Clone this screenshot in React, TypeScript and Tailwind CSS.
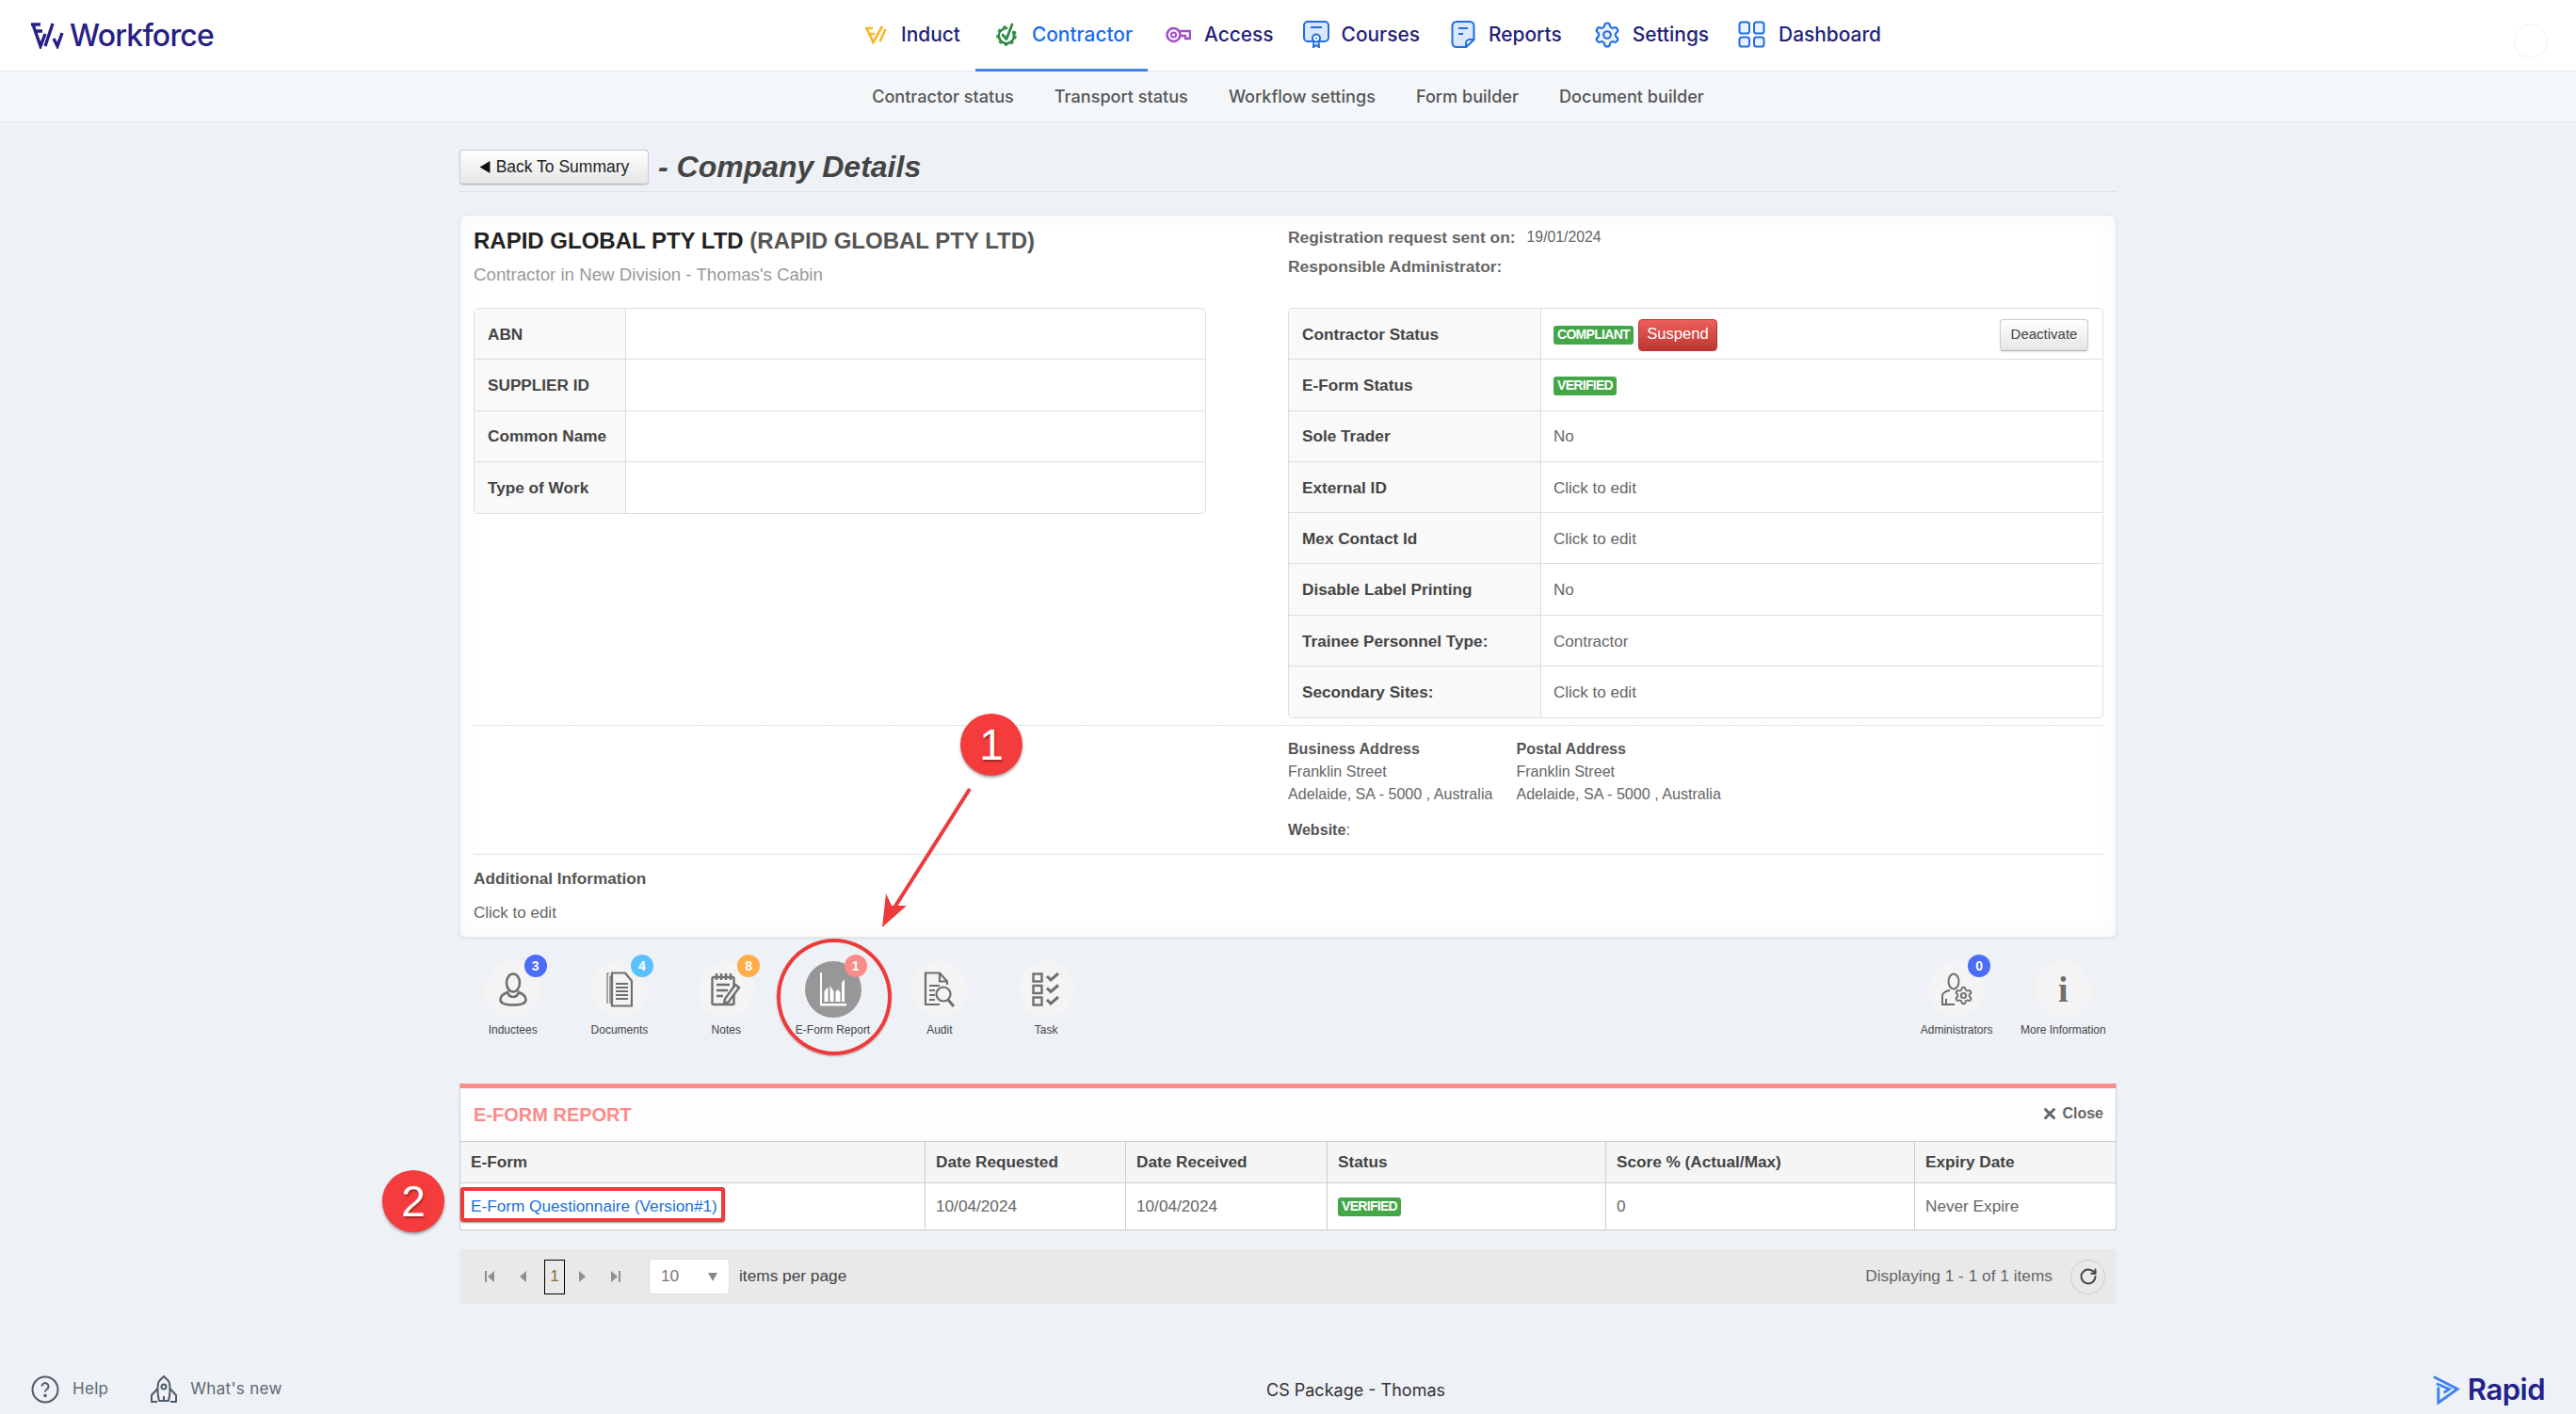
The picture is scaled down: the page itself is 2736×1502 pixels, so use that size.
import { ReactNode } from 'react';
import { Settings, X, RotateCw } from 'lucide-react';

const FONT = "font-['Liberation_Sans',Arial,sans-serif]";
const UI = "font-['Inter',sans-serif]";

function WMark({ className, color }: { className: string; color: string }) {
  return (
    <svg viewBox="0 0 36 28" className={className} fill="none" stroke={color} strokeWidth="3.4">
      <path d="M1 2h10M3 2l8 23 5-13M7 9h6" />
      <path d="M24 1l-8 24M34 11l-5 14-4-8" />
    </svg>
  );
}

function InductIcon() {
  return (
    <svg viewBox="0 0 24 20" className="w-[24px] h-[20px]" fill="none" stroke="#f8b525" strokeWidth="2.6">
      <path d="M1 3h8M2.5 3l7 15L19 1M6 9h5" />
      <path d="M22.5 4l-6 13" />
    </svg>
  );
}

function ContractorIcon() {
  return (
    <svg viewBox="0 0 22 25" className="w-[22px] h-[25px]" fill="none" strokeLinecap="round" strokeLinejoin="round">
      <circle cx="11" cy="14" r="8" stroke="#2e8b45" strokeWidth="2.6" />
      <circle cx="11" cy="14" r="9.800" stroke="#2e8b45" strokeWidth="1.800" strokeLinecap="butt" strokeDasharray="3.500 3.500" />
      <path d="M7 13l4 4.500L17 2" stroke="#fff" strokeWidth="6" />
      <path d="M7 13l4 4.500L17 2" stroke="#2e8b45" strokeWidth="2.800" />
    </svg>
  );
}

function AccessIcon() {
  return (
    <svg viewBox="0 0 27 18" className="w-[27px] h-[18px]" fill="none" stroke="#a24fcb" strokeWidth="2.600">
      <circle cx="8.500" cy="9" r="7" />
      <circle cx="8.500" cy="9" r="2.600" strokeWidth="2" />
      <path d="M15 5h11v8h-5v-3h-6" strokeLinejoin="round" />
    </svg>
  );
}

function CoursesIcon() {
  return (
    <svg viewBox="0 0 28 29" className="w-[28px] h-[29px]" fill="none" stroke="#1f6fe0" strokeWidth="2">
      <rect x="1" y="1" width="26" height="21" rx="4" fill="#dbe8fb" />
      <path d="M8 7h12" />
      <path d="M11.500 22l-.5 6 3-2 3 2-.5-6" fill="#fff" />
      <circle cx="14" cy="18.500" r="4" fill="#fff" />
      <circle cx="14" cy="18.500" r="1" fill="#1f6fe0" stroke="none" />
    </svg>
  );
}

function ReportsIcon() {
  return (
    <svg viewBox="0 0 26 29" className="w-[26px] h-[29px]" fill="none" stroke="#1f6fe0" strokeWidth="2" strokeLinejoin="round">
      <path d="M16 28H6a4.500 4.500 0 0 1-4.500-4.500V5.500A4.500 4.500 0 0 1 6 1h14a4.500 4.500 0 0 1 4.500 4.500V20z" fill="#dbe8fb" />
      <path d="M16 28v-4a4 4 0 0 1 4-4h4.500z" fill="#fff" />
      <path d="M8 8h10M8 14h5" />
    </svg>
  );
}

function DashboardIcon() {
  return (
    <svg viewBox="0 0 29 29" className="w-[29px] h-[29px]" fill="#eaf1fc" stroke="#1f6fe0" strokeWidth="2">
      <rect x="1.500" y="1.500" width="10.500" height="12" rx="2.600" />
      <rect x="17" y="1.500" width="10.500" height="12" rx="2.600" />
      <rect x="1.500" y="17.500" width="10.500" height="10" rx="2.600" />
      <rect x="17" y="17.500" width="10.500" height="10" rx="2.600" />
    </svg>
  );
}

const navItems = [
  { label: 'Induct', icon: <InductIcon />, pad: 'pl-[19px] pr-[16px]', gap: 'gap-[15px]' },
  { label: 'Contractor', icon: <ContractorIcon />, pad: 'pl-[22px] pr-[16px]', gap: 'gap-[16px]', active: true },
  { label: 'Access', icon: <AccessIcon />, pad: 'pl-[19px] pr-[14px]', gap: 'gap-[14px]' },
  { label: 'Courses', icon: <CoursesIcon />, pad: 'pl-[17px] pr-[15px]', gap: 'gap-[13px]' },
  { label: 'Reports', icon: <ReportsIcon />, pad: 'pl-[18px] pr-[16px]', gap: 'gap-[14px]' },
  { label: 'Settings', icon: <Settings className="w-[30px] h-[30px] text-[#1f6fe0] fill-[#eaf1fc]" strokeWidth={1.7} />, pad: 'pl-[17px] pr-[15px]', gap: 'gap-[12px]' },
  { label: 'Dashboard', icon: <DashboardIcon />, pad: 'pl-[16px] pr-[16px]', gap: 'gap-[14px]' },
];

const subNav = ['Contractor status', 'Transport status', 'Workflow settings', 'Form builder', 'Document builder'];

function Header() {
  return (
    <>
      <header className="h-[76px] bg-white border-b border-[#e3e8ee] flex relative">
        <div className="w-[899px] pl-[32px] flex items-center gap-[6px] shrink-0">
          <WMark className="w-[36px] h-[28px]" color="#262086" />
          <span className={`${UI} text-[32px] font-medium tracking-[-0.8px] text-[#262086]`}>Workforce</span>
        </div>
        <nav className="flex">
          {navItems.map((item) => (
            <div
              key={item.label}
              className={`${item.pad} ${item.gap} flex items-center h-[76px] border-b-[3px] ${
                item.active ? 'border-[#3e83ee] text-[#1a6bef]' : 'border-transparent text-[#231f7a]'
              }`}
            >
              {item.icon}
              <span className={`${UI} text-[20.9px] font-medium`}>{item.label}</span>
            </div>
          ))}
        </nav>
        <div className="absolute left-[2670px] top-[26px] w-[36px] h-[36px] rounded-full border border-[#f0f0f0]" />
      </header>
      <div className="h-[54px] bg-[#f4f7fa] border-b border-[#e5e8ec] flex items-center justify-center gap-[43px]">
        {subNav.map((s) => (
          <span key={s} className={`${UI} text-[18.1px] font-medium text-[#555]`}>{s}</span>
        ))}
      </div>
    </>
  );
}

function Badge({ text }: { text: string }) {
  return (
    <span className={`${FONT} inline-flex items-center justify-center h-[20px] px-[4px] rounded-[3px] bg-[#43a747] text-white font-bold text-[14px] tracking-[-0.7px]`}>
      {text}
    </span>
  );
}

function Row({ label, children, last }: { label: string; children?: ReactNode; last?: boolean }) {
  return (
    <div className={`flex h-[54.3px] ${last ? '' : 'border-b border-[#ddd]'}`}>
      <div className="bg-[#f9f9f9] border-r border-[#ddd] flex items-center pl-[14px] pt-[2px] font-bold text-[#444] text-[17.2px] shrink-0 w-[var(--label)]">
        {label}
      </div>
      <div className="flex-1 flex items-center pl-[13px] pr-[15px] pt-[2px] text-[#666] text-[17px]">{children}</div>
    </div>
  );
}

function PlainButton({ children, className }: { children: ReactNode; className?: string }) {
  return (
    <button className={`bg-gradient-to-b from-white to-[#e6e6e6] border border-[#ccc] border-b-[#b3b3b3] rounded-[4px] shadow-[0_1px_2px_rgba(0,0,0,0.1)] ${className ?? ''}`}>
      {children}
    </button>
  );
}

function CompanyPanel() {
  return (
    <section className="mt-[24px] h-[768px] bg-white rounded-[6px] border border-[#e6e8eb] shadow-[0_1px_3px_rgba(0,0,0,0.08),inset_0_0_24px_rgba(0,0,0,0.035)] pl-[14px] pr-[13px]">
      <div className="flex h-[541px]">
        <div className="w-[778px] shrink-0 [--label:161px]">
          <h2 className="mt-[12px] h-[30px] leading-[30px] text-[24px] font-bold text-[#222]">
            RAPID GLOBAL PTY LTD <span className="text-[#555]">(RAPID GLOBAL PTY LTD)</span>
          </h2>
          <p className="mt-[9px] h-[24px] leading-[24px] text-[18.7px] text-[#999]">Contractor in New Division - Thomas's Cabin</p>
          <div className="mt-[23px] bg-white border border-[#ddd] rounded-[5px] overflow-hidden">
            <Row label="ABN" />
            <Row label="SUPPLIER ID" />
            <Row label="Common Name" />
            <Row label="Type of Work" last />
          </div>
        </div>
        <div className="ml-[87px] flex-1 [--label:268px]">
          <div className="mt-[13px] h-[20px] flex items-center text-[17.4px] font-bold text-[#666]">
            Registration request sent on:
            <span className="ml-[12px] font-normal text-[15.8px]">19/01/2024</span>
          </div>
          <div className="mt-[11px] h-[20px] flex items-center text-[17.4px] font-bold text-[#666]">Responsible Administrator:</div>
          <div className="mt-[34px] bg-white border border-[#ddd] rounded-[5px] overflow-hidden">
            <Row label="Contractor Status">
              <Badge text="COMPLIANT" />
              <button className="ml-[5px] w-[84px] h-[34px] rounded-[4px] border border-[#b8342e] bg-gradient-to-b from-[#ee5f5b] to-[#bd362f] text-white text-[16.6px]">
                Suspend
              </button>
              <PlainButton className="ml-auto w-[94px] h-[34px] text-[#444] text-[15px]">Deactivate</PlainButton>
            </Row>
            <Row label="E-Form Status"><Badge text="VERIFIED" /></Row>
            <Row label="Sole Trader">No</Row>
            <Row label="External ID">Click to edit</Row>
            <Row label="Mex Contact Id">Click to edit</Row>
            <Row label="Disable Label Printing">No</Row>
            <Row label="Trainee Personnel Type:">Contractor</Row>
            <Row label="Secondary Sites:" last>Click to edit</Row>
          </div>
        </div>
      </div>
      <div className="border-t border-dotted border-[#ccc] h-[137px] pl-[865px] flex gap-[25px] text-[16.1px] text-[#666]">
        <div className="pt-[12px]">
          <p className="font-bold text-[#555] leading-[24px]">Business Address</p>
          <p className="leading-[24px]">Franklin Street</p>
          <p className="leading-[24px]">Adelaide, SA - 5000 , Australia</p>
          <p className="mt-[14px] font-bold text-[#555] leading-[24px]">Website<span className="font-normal">:</span></p>
        </div>
        <div className="pt-[12px]">
          <p className="font-bold text-[#555] leading-[24px]">Postal Address</p>
          <p className="leading-[24px]">Franklin Street</p>
          <p className="leading-[24px]">Adelaide, SA - 5000 , Australia</p>
        </div>
      </div>
      <div className="border-t border-dotted border-[#ccc]">
        <p className="mt-[14px] leading-[22px] text-[17.2px] font-bold text-[#555]">Additional Information</p>
        <p className="mt-[15px] leading-[22px] text-[17px] text-[#666]">Click to edit</p>
      </div>
    </section>
  );
}

const G = '#6f6f6f';

function UserIcon() {
  return (
    <svg viewBox="0 0 30 36" className="w-[30px] h-[36px]" fill="none" stroke={G} strokeWidth="2.6">
      <ellipse cx="15" cy="11" rx="7" ry="9.5" />
      <path d="M9 21c-5 2-7.5 5-7.5 8 0 3 3 5.5 13.500 5.500s13.500-2.500 13.500-5.500c0-3-2.500-6-7.500-8-1 3-3.500 5-6 5s-5-2-6-5z" />
    </svg>
  );
}

function DocsIcon() {
  return (
    <svg viewBox="0 0 28 38" className="w-[28px] h-[38px]" fill="none" stroke={G} strokeWidth="1.8">
      <path d="M4 34V5h2M1 34V2h2" strokeWidth="1.200" />
      <path d="M6 1.500h14l7 8.500v26.500H6z" strokeWidth="2.200" />
      <path d="M10 13h13M10 17h13M10 21h13M10 25h13M10 29h13" />
    </svg>
  );
}

function NotesIcon() {
  return (
    <svg viewBox="0 0 32 36" className="w-[32px] h-[36px]" fill="none" stroke={G} strokeWidth="2.4">
      <rect x="1.500" y="5" width="23" height="29" rx="1.500" />
      <path d="M6 1v7M11 1v7M16 1v7M21 1v7" />
      <path d="M6 13h14M6 19h12M6 25h7" />
      <path d="M15 28l11-15 4 3-11 15-5 2z" fill="#f4f4f4" />
    </svg>
  );
}

function ChartIcon() {
  return (
    <svg viewBox="0 0 28 36" className="w-[28px] h-[36px]" fill="#fff">
      <path d="M0 0h2v33h26v2.500H0z" />
      <path d="M4.500 31V20l4-5v16zM10.500 31V14l4 6v11zM16.500 31V20l3-2 2 4v9zM23 31V11l3-4v24z" />
    </svg>
  );
}

function AuditIcon() {
  return (
    <svg viewBox="0 0 34 38" className="w-[34px] h-[38px]" fill="none" stroke={G} strokeWidth="2.200">
      <path d="M17 35H2V1.500h15l8 9V14" />
      <path d="M17 1.500V10.500h8" />
      <path d="M6 15h11M6 20h6M6 25h6M6 30h6" />
      <circle cx="21" cy="24" r="7.500" />
      <path d="M26 30l6 7" strokeWidth="3" />
    </svg>
  );
}

function TaskIcon() {
  return (
    <svg viewBox="0 0 30 36" className="w-[30px] h-[36px]" fill="none" stroke={G} strokeWidth="2.400">
      <rect x="1.500" y="1.500" width="9" height="8" />
      <rect x="1.500" y="14" width="9" height="8" />
      <rect x="1.500" y="26.500" width="9" height="8" />
      <path d="M16 4l4 4 8-7M16 16.500l4 4 8-7M16 29l4 4 8-7" strokeWidth="3" />
    </svg>
  );
}

function AdminIcon() {
  return (
    <div className="relative w-[34px] h-[36px]">
      <svg viewBox="0 0 34 36" className="w-[34px] h-[36px]" fill="none" stroke={G} strokeWidth="2">
        <ellipse cx="14" cy="9.500" rx="5.500" ry="8" />
        <path d="M10 19c-5 1-8 3-8 6v9h13" />
        <path d="M6 28v6" />
      </svg>
      <Settings className="absolute left-[14px] top-[14px] w-[21px] h-[21px] text-[#6f6f6f] fill-[#f4f4f4]" strokeWidth={2.2} />
    </div>
  );
}

function InfoIcon() {
  return (
    <span className="font-['Liberation_Serif',serif] font-bold text-[38px] leading-none text-[#6f6f6f]">i</span>
  );
}

function ToolItem({ label, icon, count, badge, active }: { label: string; icon: ReactNode; count?: number; badge?: string; active?: boolean }) {
  return (
    <div className="w-[113.3px] flex flex-col items-center">
      <div className={`relative w-[60px] h-[60px] rounded-full flex items-center justify-center ${active ? 'bg-[#979797]' : 'bg-[#f4f4f4]'}`}>
        {icon}
        {count !== undefined && (
          <span className={`${badge} absolute left-[42px] top-[-7px] w-[24px] h-[24px] rounded-full flex items-center justify-center text-white text-[14px] font-bold`}>
            {count}
          </span>
        )}
      </div>
      <span className="mt-[5px] leading-[16px] text-[12px] text-[#444]">{label}</span>
    </div>
  );
}

function Toolbar() {
  return (
    <div className="mt-[25px] h-[130px] flex justify-between">
      <div className="flex">
        <ToolItem label="Inductees" icon={<UserIcon />} count={3} badge="bg-[#4a6cf7]" />
        <ToolItem label="Documents" icon={<DocsIcon />} count={4} badge="bg-[#5bc0fe]" />
        <ToolItem label="Notes" icon={<NotesIcon />} count={8} badge="bg-[#ffad4a]" />
        <ToolItem label="E-Form Report" icon={<ChartIcon />} count={1} badge="bg-[#fb8b8b]" active />
        <ToolItem label="Audit" icon={<AuditIcon />} />
        <ToolItem label="Task" icon={<TaskIcon />} />
      </div>
      <div className="flex">
        <ToolItem label="Administrators" icon={<AdminIcon />} count={0} badge="bg-[#4a6cf7]" />
        <ToolItem label="More Information" icon={<InfoIcon />} />
      </div>
    </div>
  );
}

const columns = [
  { head: 'E-Form', width: 'w-[494px]' },
  { head: 'Date Requested', width: 'w-[213px]' },
  { head: 'Date Received', width: 'w-[214px]' },
  { head: 'Status', width: 'w-[296px]' },
  { head: 'Score % (Actual/Max)', width: 'w-[328px]' },
  { head: 'Expiry Date', width: 'flex-1' },
];

function ReportPanel() {
  return (
    <section>
      <div className="border-t-[5px] border-[#fb8b8b] bg-white border-x border-b border-x-[#ccc] border-b-[#ccc] rounded-b-[3px]">
        <div className="h-[56px] flex justify-between pl-[14px] pr-[13px] bg-gradient-to-b from-white to-[#fcfcfc]">
          <h3 className="self-center text-[20px] font-bold text-[#fb8b8b] uppercase">E-Form Report</h3>
          <button className="self-start mt-[15px] flex items-center gap-[4px] text-[16px] font-bold text-[#666]">
            <X className="w-[18px] h-[18px]" strokeWidth={4} />
            Close
          </button>
        </div>
        <div className="flex h-[45px] bg-[#f5f5f5] border-y border-[#ccc]">
          {columns.map((c, i) => (
            <div key={c.head} className={`${c.width} flex items-center pl-[11px] text-[17.2px] font-bold text-[#444] ${i < 5 ? 'border-r border-[#ccc]' : ''}`}>
              {c.head}
            </div>
          ))}
        </div>
        <div className="flex h-[49px] text-[17.2px] text-[#666]">
          <div className={`${columns[0].width} flex items-center pl-[11px] border-r border-[#ccc] text-[#1a6fd8]`}>E-Form Questionnaire (Version#1)</div>
          <div className={`${columns[1].width} flex items-center pl-[11px] border-r border-[#ccc]`}>10/04/2024</div>
          <div className={`${columns[2].width} flex items-center pl-[11px] border-r border-[#ccc]`}>10/04/2024</div>
          <div className={`${columns[3].width} flex items-center pl-[11px] border-r border-[#ccc]`}><Badge text="VERIFIED" /></div>
          <div className={`${columns[4].width} flex items-center pl-[11px] border-r border-[#ccc]`}>0</div>
          <div className="flex-1 flex items-center pl-[11px]">Never Expire</div>
        </div>
      </div>
      <div className="mt-[20px] h-[58px] bg-[#e9e9e9] rounded-[4px] flex items-center pl-[26px] pr-[12px] text-[17.3px]">
        <PagerGlyph d="M1 1h2v12H1zM11 1v12L4 7z" />
        <PagerGlyph d="M9 1v12L2 7z" className="ml-[24px]" />
        <span className="ml-[16px] w-[22px] h-[37px] border border-black flex items-center justify-center text-[#8a6d3b]">1</span>
        <PagerGlyph d="M3 1v12l7-6z" className="ml-[12px]" />
        <PagerGlyph d="M1 1v12l7-6zM9 1h2v12H9z" className="ml-[24px]" />
        <div className="ml-[29px] w-[86px] h-[38px] bg-white border border-[#ddd] rounded-[4px] flex items-center justify-between pl-[12px] pr-[12px] text-[#777]">
          10
          <svg viewBox="0 0 10 9" className="w-[10px] h-[9px]" fill="#888"><path d="M0 0h10L5 9z" /></svg>
        </div>
        <span className="ml-[10px] text-[#444]">items per page</span>
        <span className="ml-auto text-[#666]">Displaying 1 - 1 of 1 items</span>
        <span className="ml-[19px] w-[37px] h-[37px] rounded-full border border-[#ccc] flex items-center justify-center">
          <RotateCw className="w-[20px] h-[20px] text-[#444]" strokeWidth={2.4} />
        </span>
      </div>
    </section>
  );
}

function PagerGlyph({ d, className }: { d: string; className?: string }) {
  return (
    <svg viewBox="0 0 12 14" className={`w-[12px] h-[14px] ${className ?? ''}`} fill="#8f8f8f">
      <path d={d} />
    </svg>
  );
}

function Footer() {
  return (
    <footer className="mt-auto h-[54px] relative flex items-center justify-between pl-[33px] pr-[33px] pt-[2px]">
      <div className={`${UI} flex items-center text-[17px] text-[#5a6872] tracking-[0.3px]`}>
        <svg viewBox="0 0 30 30" className="w-[30px] h-[30px]" fill="none" stroke="#4f5b66" strokeWidth="2">
          <circle cx="15" cy="15" r="13.500" />
          <path d="M11.500 11.500a3.500 3.500 0 1 1 5.500 3c-1.500 1-2 1.500-2 3" />
          <circle cx="15" cy="21.500" r="0.800" fill="#4f5b66" />
        </svg>
        <span className="ml-[14px]">Help</span>
        <svg viewBox="0 0 30 30" className="ml-[44px] w-[30px] h-[30px]" fill="none" stroke="#4f5b66" strokeWidth="2" strokeLinejoin="round">
          <path d="M15 1l5 5c2 3 2 14 0 21H10C8 20 8 9 10 6z" />
          <circle cx="15" cy="12" r="2.500" />
          <path d="M8.500 14L2 21v7h6M21.500 14l6.500 7v7h-6M15 22v6" />
        </svg>
        <span className="ml-[13px]">What's new</span>
      </div>
      <span className={`${UI} absolute left-[1345px] text-[18px] text-[#333]`}>CS Package - Thomas</span>
      <div className="flex items-center gap-[8px]">
        <svg viewBox="0 0 30 32" className="w-[29px] h-[31px]" fill="none" stroke="#3e83ee" strokeWidth="3">
          <path d="M1 1.500L27 15 6 30V13" />
          <path d="M4 9l14 6-6 4" />
        </svg>
        <span className={`${UI} text-[31px] font-semibold tracking-[-0.5px] text-[#22228a]`}>Rapid</span>
      </div>
    </footer>
  );
}

function Numbered({ n, className }: { n: number; className: string }) {
  return (
    <div className={`${className} absolute w-[66px] h-[66px] rounded-full bg-[#f43c3c] shadow-[0_2px_3px_rgba(0,0,0,0.35)] flex items-center justify-center text-white text-[46px] [text-shadow:1px_2px_2px_rgba(0,0,0,0.35)]`}>
      {n}
    </div>
  );
}

function Annotations() {
  return (
    <>
      <Numbered n={1} className="left-[1020px] top-[758px]" />
      <Numbered n={2} className="left-[406px] top-[1243px]" />
      <svg className="absolute left-[920px] top-[830px] w-[120px] h-[160px]" viewBox="0 0 120 160" fill="none">
        <path d="M110 8L23 145" stroke="#ee3a3a" strokeWidth="4" />
        <path d="M17 155l4-36 6 13 16 0z" fill="#ee3a3a" />
      </svg>
      <div className="absolute left-[825px] top-[997px] w-[122px] h-[124px] rounded-[50%] border-[4px] border-[#ee3a3a] shadow-[0_1px_2px_rgba(0,0,0,0.3)]" />
      <div className="absolute left-[489px] top-[1261px] w-[281px] h-[37px] rounded-[3px] border-[4px] border-[#ee3a3a] shadow-[0_1px_2px_rgba(0,0,0,0.4)]" />
    </>
  );
}

export default function App() {
  return (
    <div className={`${FONT} relative h-[1502px] bg-[#eef1f6] flex flex-col overflow-hidden`}>
      <Header />
      <main className="w-[1760px] mx-auto">
        <div className="mt-[28px] h-[38px] flex items-center">
          <PlainButton className="w-[201px] h-[37px] flex items-center justify-center gap-[6px] text-[17.5px] text-[#222]">
            <svg viewBox="0 0 10 12" className="w-[12px] h-[13px]" fill="#111"><path d="M10 0v12L0 6z" /></svg>
            Back To Summary
          </PlainButton>
          <h1 className="ml-[10px] text-[32px] font-bold italic text-[#444]">- Company Details</h1>
        </div>
        <div className="h-px bg-[#dfe2e6] mt-[7px]" />
        <CompanyPanel />
        <Toolbar />
        <ReportPanel />
      </main>
      <Footer />
      <Annotations />
    </div>
  );
}
